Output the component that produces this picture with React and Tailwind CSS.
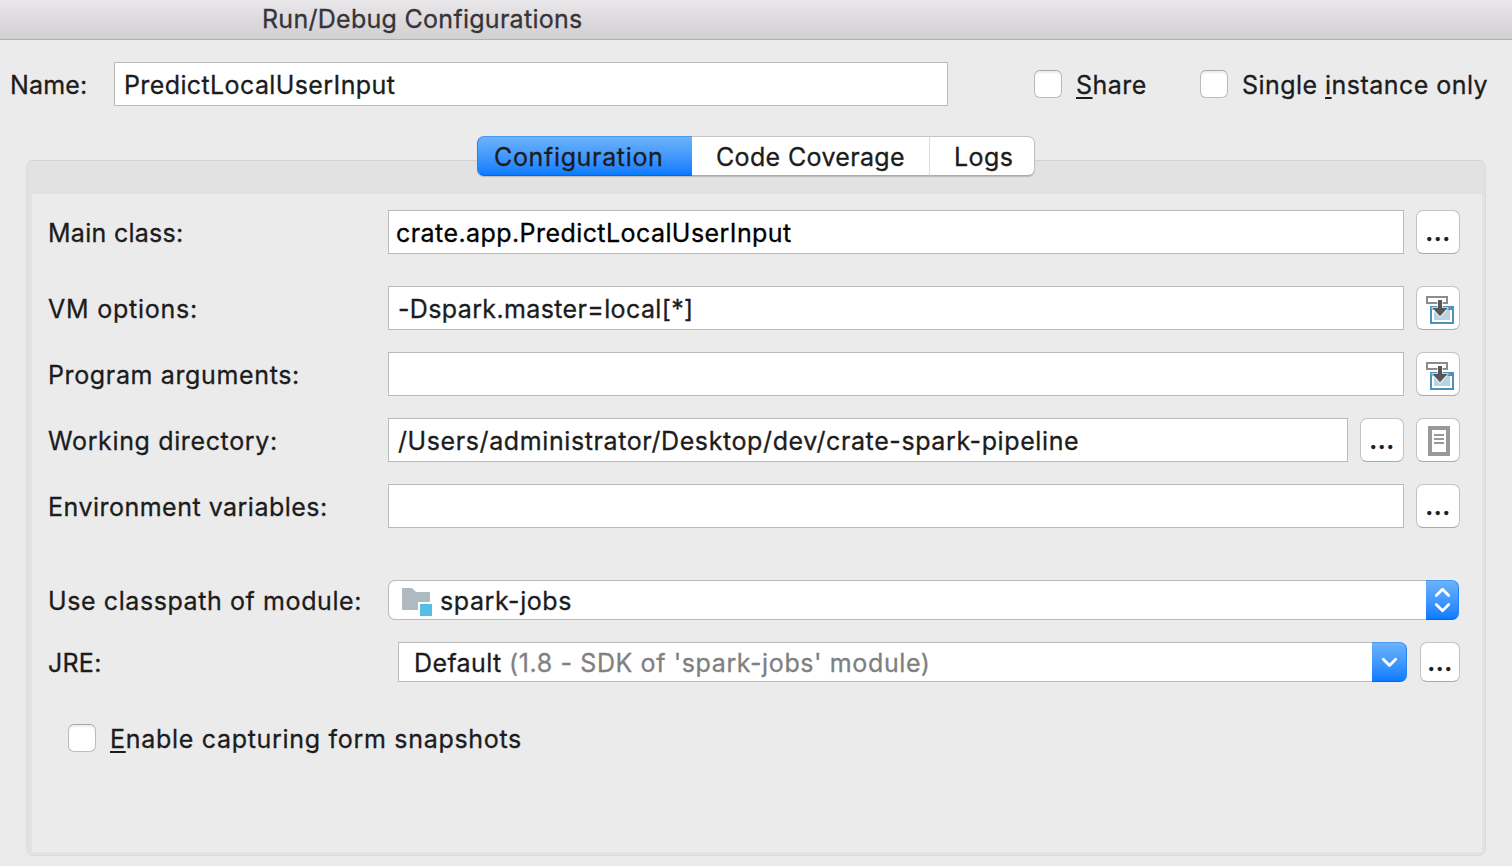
function FieldRow({ label, labelClass, className = "", children }) {
  return (
    <div className={`flex h-11 shrink-0 items-center ${className}`}>
      <div className={`w-[340px] shrink-0 pt-0.5 ${labelClass}`}>{label}</div>
      {children}
    </div>
  );
}

function TextField({ children, className = "" }) {
  return (
    <div className={`flex h-11 items-center border border-[#b9b9b9] bg-white pt-0.5 ${className}`}>
      {children}
    </div>
  );
}

function SquareButton({ children, className = "ml-3 h-11 w-11" }) {
  return (
    <button
      className={`flex shrink-0 items-center justify-center rounded-[7px] border border-[#c2c2c2] border-b-[#a9a9a9] bg-white ${className}`}
    >
      {children}
    </button>
  );
}

function Dots() {
  return <span className="font-semibold leading-[30px] tracking-[0.5px]">...</span>;
}

function Checkbox() {
  return (
    <span className="h-7 w-7 shrink-0 rounded-[6px] border border-[#bcbcbc] border-t-[#a6a6a6] bg-white shadow-[inset_0_2px_2px_rgba(0,0,0,0.07)]" />
  );
}

function Mnemonic({ children }) {
  return (
    <span className="underline decoration-2 underline-offset-[3px] [text-decoration-skip-ink:none]">
      {children}
    </span>
  );
}

function InsertMacroIcon() {
  return (
    <svg width="42" height="42" viewBox="1 1 42 42" className="shrink-0" shapeRendering="crispEdges">
      <rect x="11" y="11" width="20" height="6" fill="#fff" stroke="#8c8c8c" strokeWidth="2" />
      <rect x="15" y="21" width="22" height="16" fill="#fff" stroke="#4a93bd" strokeWidth="2" />
      <rect x="14" y="20" width="24" height="4" fill="#4a93bd" />
      <rect x="18" y="24" width="16" height="10" fill="#b7d3e4" />
      <path d="M21 12h6v9h4.500l1.500 1L24 32 15 22l1.500-1H21z" fill="#fff" fillOpacity="0.65" shapeRendering="auto" />
      <path d="M10 10h22v2H10z" fill="#8c8c8c" />
      <path d="M22 14h4v8h5.500L24 30.300 16.500 22H22z" fill="#575757" shapeRendering="auto" />
    </svg>
  );
}

function DocumentIcon() {
  return (
    <svg width="42" height="42" viewBox="1 1 42 42" className="shrink-0" shapeRendering="crispEdges">
      <rect x="14" y="10" width="18" height="26" fill="#fff" stroke="#999" strokeWidth="4" />
      <path d="M18 16h10v2H18zM18 20h10v2H18zM18 24h10v2H18z" fill="#999" />
    </svg>
  );
}

function ModuleIcon() {
  return (
    <svg width="30" height="28" viewBox="0 0 30 28" className="mt-1 shrink-0">
      <path d="M0 0h10l4 4h14v18H0z" fill="#afbac0" />
      <path d="M16 14h14v14H16z" fill="#fff" />
      <path d="M18 16h12v12H18z" fill="#55bde3" />
    </svg>
  );
}

export default function App() {
  return (
    <div className="flex h-[866px] w-full flex-col overflow-hidden bg-[#ebebeb] font-['Inter',sans-serif] text-[25px] leading-[30px] whitespace-nowrap text-[#1c1c1c] [-webkit-text-stroke-width:0.3px]">
      <header className="h-10 shrink-0 border-b border-[#b0b0b0] bg-linear-to-b from-[#e9e7ea] to-[#d1cfd1] pt-1 pl-[262px] tracking-[0.28px] text-[#363437]">
        Run/Debug Configurations
      </header>

      <div className="mt-[22px] flex h-11 shrink-0 items-center pl-[10px]">
        <div className="w-[104px] pt-0.5 tracking-[0.15px]">Name:</div>
        <TextField className="w-[834px] pl-[9px] tracking-[0.39px]">PredictLocalUserInput</TextField>
        <label className="ml-[86px] flex items-center">
          <Checkbox />
          <span className="ml-3.5 w-[124px] pt-0.5 tracking-[0.5px]">
            <Mnemonic>S</Mnemonic>hare
          </span>
        </label>
        <label className="flex items-center">
          <Checkbox />
          <span className="ml-3.5 pt-0.5 tracking-[0.46px]">
            Single <Mnemonic>i</Mnemonic>nstance only
          </span>
        </label>
      </div>

      <nav className="relative z-10 mt-[30px] ml-[477px] flex h-10 w-[558px] shrink-0 rounded-[7px] shadow-[0_1px_1px_rgba(0,0,0,0.18)]">
        <div className="flex w-[215px] items-center rounded-l-[7px] border border-r-0 border-t-[#4a9bf3] border-b-[#0068f5] border-l-[#2383f7] bg-linear-to-b from-[#6bb3fa] to-[#077bff] pt-0.5 pl-4 tracking-[0.66px]">
          Configuration
        </div>
        <div className="flex w-[238px] items-center border-y border-r border-t-[#c4c4c4] border-r-[#dedede] border-b-[#ababab] bg-white pt-0.5 pl-6 tracking-[0.35px]">
          Code Coverage
        </div>
        <div className="flex flex-1 items-center rounded-r-[7px] border border-l-0 border-t-[#c4c4c4] border-r-[#c0c0c0] border-b-[#ababab] bg-white pt-0.5 pl-6 tracking-[0.45px]">
          Logs
        </div>
      </nav>

      <section className="-mt-4 mr-[26px] ml-[26px] h-[696px] shrink-0 rounded-[8px] border border-[#dcdcdc] border-t-[#d2d2d2] bg-[#e2e2e2] pt-[33px] pr-[3px] pb-[3px] pl-[5px]">
        <div className="flex h-full flex-col bg-[#ebebeb] pt-4 pl-4">
          <FieldRow label="Main class:" labelClass="tracking-[0.28px]">
            <TextField className="w-[1016px] pl-[7px] tracking-[0.43px] text-black">
              crate.app.PredictLocalUserInput
            </TextField>
            <SquareButton><Dots /></SquareButton>
          </FieldRow>
          <FieldRow label="VM options:" labelClass="tracking-[0.76px]" className="mt-8">
            <TextField className="w-[1016px] pl-[9px] tracking-[0.37px]">-Dspark.master=local[*]</TextField>
            <SquareButton><InsertMacroIcon /></SquareButton>
          </FieldRow>
          <FieldRow label="Program arguments:" labelClass="tracking-[0.64px]" className="mt-[22px]">
            <TextField className="w-[1016px]" />
            <SquareButton><InsertMacroIcon /></SquareButton>
          </FieldRow>
          <FieldRow label="Working directory:" labelClass="tracking-[0.64px]" className="mt-[22px]">
            <TextField className="w-[960px] pl-[9px] tracking-[0.6px]">
              /Users/administrator/Desktop/dev/crate-spark-pipeline
            </TextField>
            <SquareButton><Dots /></SquareButton>
            <SquareButton><DocumentIcon /></SquareButton>
          </FieldRow>
          <FieldRow label="Environment variables:" labelClass="tracking-[0.49px]" className="mt-[22px]">
            <TextField className="w-[1016px]" />
            <SquareButton><Dots /></SquareButton>
          </FieldRow>

          <FieldRow label="Use classpath of module:" labelClass="tracking-[0.59px]" className="mt-[50px]">
            <div className="flex h-10 w-[1071px]">
              <div className="flex flex-1 items-center rounded-l-[7px] border border-r-0 border-[#b9b9b9] bg-white pl-[13px] tracking-[0.58px]">
                <ModuleIcon />
                <span className="ml-2 pt-0.5">spark-jobs</span>
              </div>
              <div className="w-[33px] rounded-r-[7px] border border-l-0 border-t-[#4a9bf3] border-r-[#2383f7] border-b-[#0068f5] bg-linear-to-b from-[#6bb3fa] to-[#077bff]">
                <svg width="32" height="38" viewBox="0 1 32 38" fill="none" stroke="#fff" strokeWidth="2.800" strokeLinecap="round" strokeLinejoin="round">
                  <path d="M10.300 15.500l6.200-6.200 6.200 6.200M10.300 24.500l6.200 6.200 6.200-6.200" />
                </svg>
              </div>
            </div>
          </FieldRow>
          <FieldRow label="JRE:" labelClass="tracking-[0.25px]" className="mt-[18px]">
            <div className="ml-[10px] flex h-10 w-[1009px]">
              <div className="flex flex-1 items-center border border-r-0 border-[#b9b9b9] bg-white pt-0.5 pl-[15px]">
                <span className="w-[95px] tracking-[0.38px]">Default</span>
                <span className="tracking-[0.61px] text-[#808080]">(1.8 - SDK of &#39;spark-jobs&#39; module)</span>
              </div>
              <div className="w-[35px] rounded-r-[7px] border border-l-0 border-t-[#4a9bf3] border-r-[#2383f7] border-b-[#0068f5] bg-linear-to-b from-[#6bb3fa] to-[#077bff]">
                <svg width="34" height="38" viewBox="0 1 34 38" fill="none" stroke="#fff" strokeWidth="2.800" strokeLinecap="round" strokeLinejoin="round">
                  <path d="M11.300 17.300l6.200 6.200 6.200-6.200" />
                </svg>
              </div>
            </div>
            <SquareButton className="ml-[13px] h-10 w-10"><Dots /></SquareButton>
          </FieldRow>

          <label className="mt-10 ml-5 flex h-7 items-center">
            <Checkbox />
            <span className="ml-3.5 pt-0.5 tracking-[0.7px]">
              <Mnemonic>E</Mnemonic>nable capturing form snapshots
            </span>
          </label>
        </div>
      </section>
    </div>
  );
}
